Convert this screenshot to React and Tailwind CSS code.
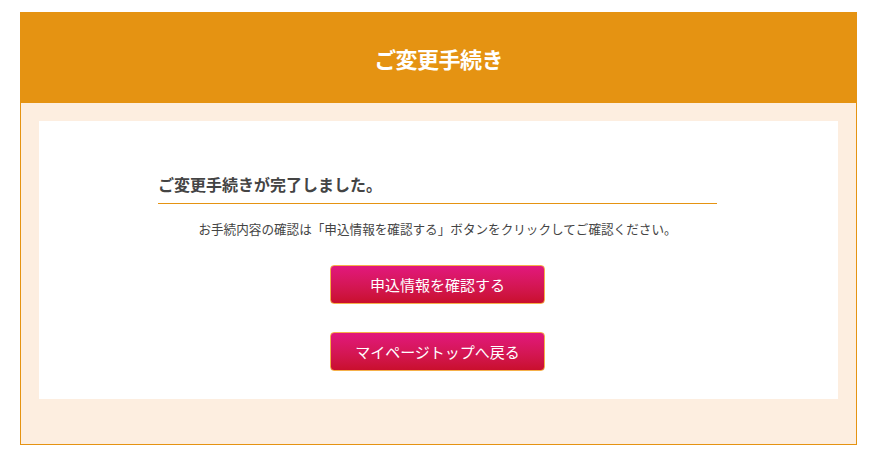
import React from 'react';

const font = { fontFamily: '"Noto Sans CJK JP", "Noto Sans", sans-serif' };

const PinkButton = ({ children }) => (
  <button
    type="button"
    className="w-[215px] h-[39px] rounded-[4px] border border-[#f5b04a] bg-gradient-to-b from-[#e2177c] to-[#c90f2c] text-white text-[15px] leading-none"
  >
    {children}
  </button>
);

export default function App() {
  return (
    <div className="w-full min-h-[460px] bg-white pt-[12px] pl-[20px]" style={font}>
      <div className="w-[837px] border border-[#e59312]">
        <header className="h-[90px] bg-[#e59312] flex items-center justify-center">
          <h1 className="text-white text-[22px] font-bold tracking-tight">ご変更手続き</h1>
        </header>
        <div className="bg-[#fdeee0] px-[18px] pt-[18px] pb-[45px]">
          <div className="bg-white h-[278px] flex flex-col items-center pt-[52px] pr-[2px]">
            <div className="w-[559px]">
              <h2 className="text-[16px] font-bold text-[#444] leading-[22px] pb-[8px] border-b border-[#e59312]">
                ご変更手続きが完了しました。
              </h2>
              <p className="text-[12.6px] text-[#444] text-center mt-[16px] leading-[18px]">
                お手続内容の確認は「申込情報を確認する」ボタンをクリックしてご確認ください。
              </p>
            </div>
            <div className="mt-[27px] flex flex-col items-center gap-[28px]">
              <PinkButton>申込情報を確認する</PinkButton>
              <PinkButton>マイページトップへ戻る</PinkButton>
            </div>
          </div>
        </div>
      </div>
    </div>
  );
}
